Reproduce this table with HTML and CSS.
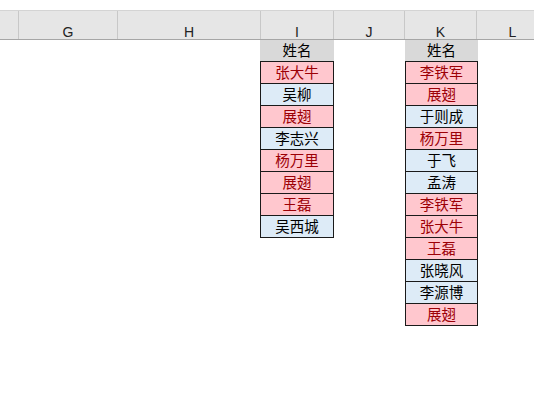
FILE: index.html
```html
<!DOCTYPE html>
<html lang="zh">
<head>
<meta charset="utf-8">
<link rel="stylesheet" href="styles.css">
</head>
<body>
<div class="sheet">
  <div class="colhead">
    <div class="ch c0"></div>
    <div class="ch cg">G</div>
    <div class="ch ch-h">H</div>
    <div class="ch ci">I</div>
    <div class="ch cj">J</div>
    <div class="ch ck">K</div>
    <div class="ch cl">L</div>
  </div>
  <div class="grid">
    <div class="gap gap1"></div>
    <div class="list li">
      <div class="cell title">姓名</div>
      <div class="cell red first">张大牛</div>
      <div class="cell blue">吴柳</div>
      <div class="cell red">展翅</div>
      <div class="cell blue">李志兴</div>
      <div class="cell red">杨万里</div>
      <div class="cell red">展翅</div>
      <div class="cell red">王磊</div>
      <div class="cell blue">吴西城</div>
    </div>
    <div class="gap gap2"></div>
    <div class="list lk">
      <div class="cell title">姓名</div>
      <div class="cell red first">李铁军</div>
      <div class="cell red">展翅</div>
      <div class="cell blue">于则成</div>
      <div class="cell red">杨万里</div>
      <div class="cell blue">于飞</div>
      <div class="cell blue">孟涛</div>
      <div class="cell red">李铁军</div>
      <div class="cell red">张大牛</div>
      <div class="cell red">王磊</div>
      <div class="cell blue">张晓风</div>
      <div class="cell blue">李源博</div>
      <div class="cell red">展翅</div>
    </div>
  </div>
</div>
</body>
</html>
```
FILE: styles.css
```css
html, body {
  margin: 0;
  padding: 0;
  background: #ffffff;
}
.sheet {
  width: 534px;
  height: 402px;
  overflow: hidden;
  font-family: "Noto Sans CJK SC", "Liberation Sans", sans-serif;
}
.colhead {
  display: flex;
  margin-top: 10px;
  height: 28px;
  border-top: 1px solid #d4d4d4;
  border-bottom: 1px solid #a6a6a6;
  background: #e6e6e6;
}
.ch {
  flex: none;
  box-sizing: border-box;
  border-right: 1px solid #c8c8c8;
  font-family: "Liberation Sans", sans-serif;
  font-size: 14px;
  color: #222;
  display: flex;
  align-items: center;
  justify-content: center;
  padding-top: 14px;
}
.c0 { width: 19px; }
.cg { width: 99px; }
.ch-h { width: 143px; }
.ci { width: 73px; }
.cj { width: 71px; }
.ck { width: 72px; }
.cl { width: 72px; }
.grid {
  display: flex;
  align-items: flex-start;
}
.gap1 { width: 260px; flex: none; }
.gap2 { width: 71px; flex: none; }
.list {
  flex: none;
  width: 74px;
  display: flex;
  flex-direction: column;
}
.lk { width: 73px; }
.cell {
  box-sizing: border-box;
  height: 22px;
  border: 1px solid #1a1a1a;
  border-top: none;
  display: flex;
  align-items: center;
  justify-content: center;
  font-size: 14.5px;
  line-height: 1;
  color: #000;
}
.cell.first {
  height: 23px;
  border-top: 1px solid #1a1a1a;
}
.cell.title {
  height: 21px;
  border: none;
  background: #d9d9d9;
}
.red {
  background: #ffc7ce;
  color: #9c0006;
}
.blue {
  background: #ddebf7;
}
```
